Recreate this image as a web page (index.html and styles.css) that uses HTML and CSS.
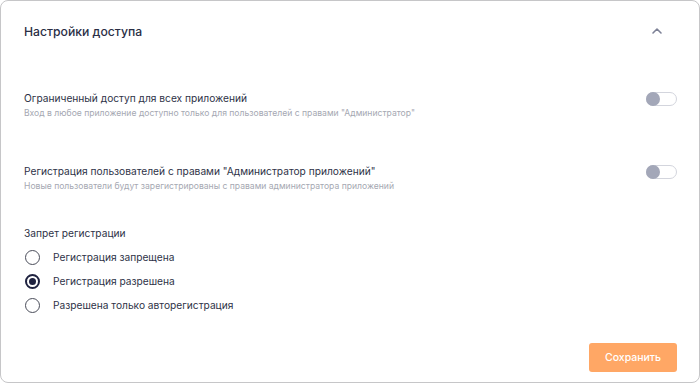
FILE: index.html
```html
<!DOCTYPE html>
<html lang="ru">
<head>
<meta charset="utf-8">
<title>Настройки доступа</title>
<link rel="stylesheet" href="styles.css">
</head>
<body>
<div class="card">
  <div class="header">
    <div class="title">Настройки доступа</div>
    <svg class="chevron" width="12" height="8" viewBox="0 0 12 8"><polyline points="2,6 6,2 10,6" fill="none" stroke="#7d8196" stroke-width="1.6" stroke-linecap="round" stroke-linejoin="round"/></svg>
  </div>

  <div class="setting first">
    <div class="setting-text">
      <div class="setting-title">Ограниченный доступ для всех приложений</div>
      <div class="setting-desc">Вход в любое приложение доступно только для пользователей с правами "Администратор"</div>
    </div>
    <div class="toggle"><span class="knob"></span></div>
  </div>

  <div class="setting second">
    <div class="setting-text">
      <div class="setting-title">Регистрация пользователей с правами "Администратор приложений"</div>
      <div class="setting-desc">Новые пользователи будут зарегистрированы с правами администратора приложений</div>
    </div>
    <div class="toggle"><span class="knob"></span></div>
  </div>

  <div class="group-label">Запрет регистрации</div>
  <div class="radios">
    <div class="radio-row"><span class="radio"></span><span class="radio-label">Регистрация запрещена</span></div>
    <div class="radio-row"><span class="radio checked"></span><span class="radio-label">Регистрация разрешена</span></div>
    <div class="radio-row"><span class="radio"></span><span class="radio-label">Разрешена только авторегистрация</span></div>
  </div>

  <div class="footer">
    <button class="save">Сохранить</button>
  </div>
</div>
</body>
</html>
```

FILE: styles.css
```css
html, body {
  margin: 0;
  padding: 0;
  background: #ffffff;
}
body {
  font-family: Inter, "Noto Sans", "DejaVu Sans", sans-serif;
  color: #2b2f44;
}
.card {
  width: 700px;
  height: 383px;
  box-sizing: border-box;
  border: 1px solid #c6c6c8;
  border-radius: 8px;
  padding: 0 22px 10px 23px;
  display: flex;
  flex-direction: column;
}
.header {
  height: 60px;
  display: flex;
  align-items: center;
  justify-content: space-between;
}
.title {
  font-size: 12.2px;
  font-weight: 500;
  color: #2a2e45;
}
.chevron {
  margin-right: 14px;
}
.setting {
  display: flex;
  justify-content: space-between;
  align-items: flex-start;
}
.setting.first { margin-top: 30px; }
.setting.second { margin-top: 45px; }
.setting-title {
  font-size: 10.2px;
  line-height: 15px;
  color: #2e3247;
}
.setting-desc {
  font-size: 8.6px;
  line-height: 12px;
  margin-top: 1px;
  color: #a5a8b2;
}
.toggle {
  width: 31px;
  height: 14px;
  box-sizing: border-box;
  border: 1px solid #d3d5dd;
  border-radius: 7px;
  position: relative;
  margin-top: 1px;
  background: #fff;
}
.knob {
  position: absolute;
  left: -1px;
  top: -1px;
  width: 14px;
  height: 14px;
  border-radius: 50%;
  background: #a3a7b8;
}
.group-label {
  margin-top: 34px;
  font-size: 10.2px;
  line-height: 14px;
  color: #2e3247;
}
.radios {
  margin-top: 5px;
  display: flex;
  flex-direction: column;
}
.radio-row {
  height: 24px;
  display: flex;
  align-items: center;
}
.radio {
  width: 15px;
  height: 15px;
  box-sizing: border-box;
  border: 1.5px solid #4a4d5a;
  border-radius: 50%;
  margin-left: 1px;
  margin-right: 13px;
  display: flex;
  align-items: center;
  justify-content: center;
}
.radio.checked {
  border: 2px solid #1f2240;
}
.radio.checked::after {
  content: "";
  width: 7px;
  height: 7px;
  border-radius: 50%;
  background: #1f2240;
}
.radio-label {
  font-size: 10.2px;
  color: #2e3247;
}
.footer {
  margin-top: auto;
  display: flex;
  justify-content: flex-end;
}
.save {
  width: 88px;
  height: 29px;
  border: none;
  border-radius: 3px;
  background: #ffa765;
  color: #ffffff;
  font-family: Inter, "Noto Sans", sans-serif;
  font-size: 10.5px;
  font-weight: 500;
  padding: 0;
}
```
